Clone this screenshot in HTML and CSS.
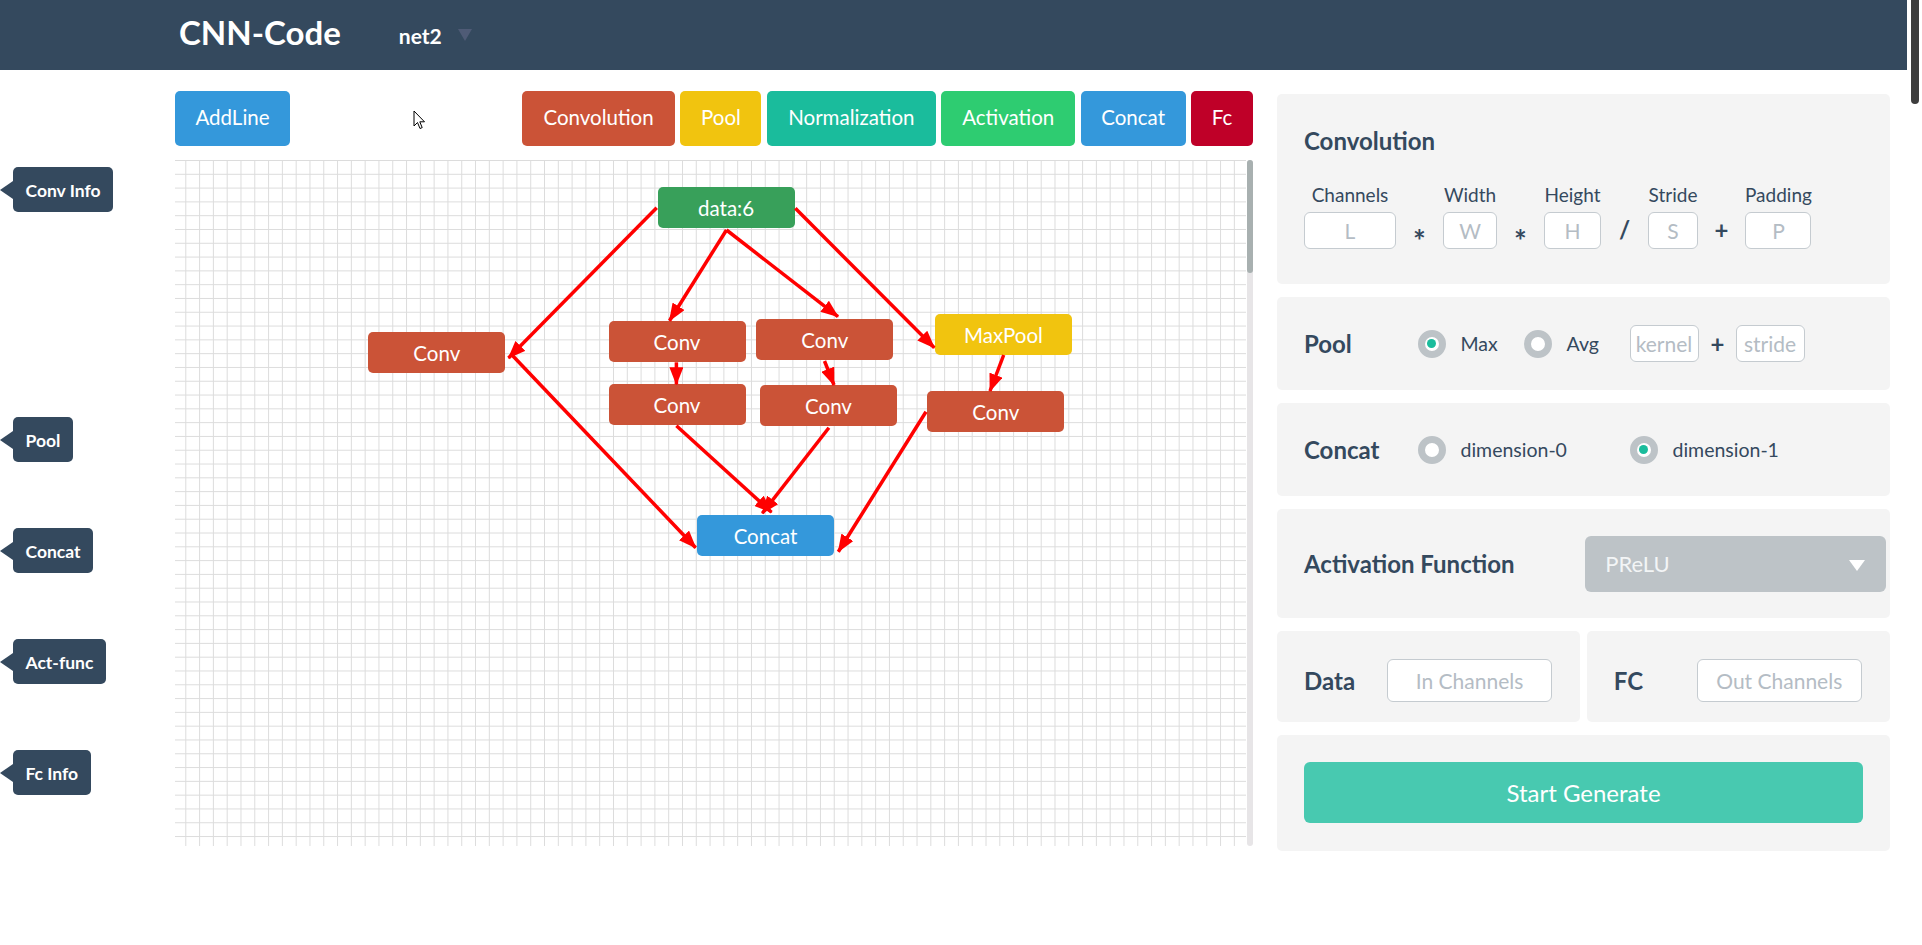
FILE: index.html
```html
<!DOCTYPE html>
<html lang="en">
<head>
<meta charset="utf-8">
<title>CNN-Code</title>
<link rel="stylesheet" href="styles.css">
</head>
<body>
<div class="page">
  <header class="topbar">
    <span class="brand">CNN-Code</span>
    <span class="net">net2</span>
    <span class="caret"></span>
  </header>
  <div class="main">
    <aside class="side">
      <div class="tip tip-first">Conv Info</div>
      <div class="tip">Pool</div>
      <div class="tip">Concat</div>
      <div class="tip">Act-func</div>
      <div class="tip">Fc Info</div>
    </aside>
    <section class="work">
      <div class="toolbar">
        <button class="btn b-add">AddLine</button>
        <div class="tools">
          <button class="btn b-conv">Convolution</button>
          <button class="btn b-pool">Pool</button>
          <button class="btn b-norm">Normalization</button>
          <button class="btn b-act">Activation</button>
          <button class="btn b-concat">Concat</button>
          <button class="btn b-fc">Fc</button>
        </div>
      </div>
      <div class="canvas">
        <div class="grid">
          <div class="node n-data" style="left:482.6px;top:27.3px">data:6</div>
          <div class="node n-conv" style="left:193.3px;top:172.3px">Conv</div>
          <div class="node n-conv" style="left:433.5px;top:161px">Conv</div>
          <div class="node n-conv" style="left:581.3px;top:159px">Conv</div>
          <div class="node n-conv" style="left:433.5px;top:224.3px">Conv</div>
          <div class="node n-conv" style="left:585px;top:225px">Conv</div>
          <div class="node n-pool" style="left:760px;top:154.3px">MaxPool</div>
          <div class="node n-conv" style="left:752.3px;top:231px">Conv</div>
          <div class="node n-concat" style="left:522px;top:355px">Concat</div>
          <svg class="links" viewBox="0 0 1071 686" width="1071" height="686">
            <defs>
              <marker id="ah" markerUnits="userSpaceOnUse" markerWidth="18" markerHeight="14" refX="17" refY="7" orient="auto">
                <path d="M0,0 L18,7 L0,14 Z" fill="#ff0000"/>
              </marker>
            </defs>
            <g stroke="#ff0000" stroke-width="3.5" fill="none" marker-end="url(#ah)">
              <line x1="481.7" y1="47.7" x2="333.5" y2="198"/>
              <line x1="337" y1="195" x2="520.7" y2="387.7"/>
              <line x1="551.5" y1="70" x2="494.5" y2="160.7"/>
              <line x1="551.5" y1="70" x2="663" y2="156.7"/>
              <line x1="620.3" y1="48.3" x2="759.3" y2="187.7"/>
              <line x1="501.4" y1="202.3" x2="501.4" y2="224.3"/>
              <line x1="649.5" y1="201" x2="659" y2="225"/>
              <line x1="828.7" y1="195" x2="815" y2="231"/>
              <line x1="501.4" y1="265.7" x2="596.5" y2="352.3"/>
              <line x1="653.9" y1="267.7" x2="587.3" y2="353.3"/>
              <line x1="751" y1="251.7" x2="663.3" y2="391.7"/>
            </g>
          </svg>
        </div>
        <div class="vscroll"><div class="vthumb"></div></div>
      </div>
    </section>
    <section class="panels">
      <div class="panel p-conv">
        <h3 class="ptitle">Convolution</h3>
        <div class="fields">
          <div class="field"><span class="flabel">Channels</span><input class="inp w-l" placeholder="L"></div>
          <span class="op op-star">*</span>
          <div class="field"><span class="flabel">Width</span><input class="inp w-w" placeholder="W"></div>
          <span class="op op-star">*</span>
          <div class="field"><span class="flabel">Height</span><input class="inp w-h" placeholder="H"></div>
          <span class="op">/</span>
          <div class="field"><span class="flabel">Stride</span><input class="inp w-s" placeholder="S"></div>
          <span class="op">+</span>
          <div class="field"><span class="flabel">Padding</span><input class="inp w-p" placeholder="P"></div>
        </div>
      </div>
      <div class="panel p-row p-mid">
        <span class="plabel">Pool</span>
        <div class="opts">
          <span class="radio on"><span class="rdot"></span>Max</span>
          <span class="radio"><span class="rdot"></span>Avg</span>
          <span class="pair"><input class="inp inp-sm" placeholder="kernel"><span class="plus">+</span></span>
          <span class="pair"><input class="inp inp-sm" placeholder="stride"></span>
        </div>
      </div>
      <div class="panel p-row p-mid">
        <span class="plabel">Concat</span>
        <div class="opts">
          <span class="radio span2"><span class="rdot"></span>dimension-0</span>
          <span class="radio on span2"><span class="rdot"></span>dimension-1</span>
        </div>
      </div>
      <div class="panel p-row p-act">
        <span class="plabel wide">Activation Function</span>
        <div class="select"><span>PReLU</span><span class="select-caret"></span></div>
      </div>
      <div class="p-split">
        <div class="panel p-row p-half">
          <span class="dlabel">Data</span>
          <input class="inp inp-ch" placeholder="In Channels">
        </div>
        <div class="panel p-row p-half">
          <span class="dlabel">FC</span>
          <input class="inp inp-ch" placeholder="Out Channels">
        </div>
      </div>
      <div class="panel p-start">
        <button class="gen">Start Generate</button>
      </div>
    </section>
  </div>
</div>
<div class="pscroll"><div class="pthumb"></div></div>
<svg class="cursor" viewBox="0 0 13 20" width="13" height="20">
  <path d="M1,1 L1,16 L4.5,12.5 L7,18.5 L9.2,17.6 L6.8,11.8 L11.5,11.8 Z" fill="#fff" stroke="#000" stroke-width="1" stroke-linejoin="round"/>
</svg>
</body>
</html>
```

FILE: styles.css
```css
* { box-sizing: border-box; }
html, body { margin: 0; padding: 0; }
body {
  font-family: Lato, "Open Sans", "Liberation Sans", sans-serif;
  color: #34495e;
  background: #fff;
  width: 1922px;
  height: 945px;
  overflow: hidden;
  position: relative;
}
.page { width: 1907px; }

/* header */
.topbar {
  height: 70px;
  background: #34495e;
  display: flex;
  align-items: center;
  padding-left: 179px;
  color: #fff;
}
.brand { font-size: 33px; font-weight: 700; line-height: 1; margin-bottom: 6px; }
.net { font-size: 21px; font-weight: 700; line-height: 1; margin-left: 58px; }
.caret {
  width: 0; height: 0;
  border-left: 7.5px solid transparent;
  border-right: 7.5px solid transparent;
  border-top: 12px solid #4f5b76;
  margin-left: 16px;
}

.main { display: flex; }

/* left tooltips */
.side {
  width: 175px;
  flex: none;
  display: flex;
  flex-direction: column;
  align-items: flex-start;
  padding-top: 97px;
  gap: 66px;
}
.tip {
  position: relative;
  margin-left: 13px;
  height: 45px;
  padding: 1px 12.5px 0;
  background: #34495e;
  color: #fff;
  border-radius: 5px;
  font-weight: 700;
  font-size: 17.5px;
  display: flex;
  align-items: center;
  white-space: nowrap;
}
.tip::before {
  content: "";
  position: absolute;
  left: -13px;
  top: 50%;
  margin-top: -9px;
  border-right: 13px solid #34495e;
  border-top: 9px solid transparent;
  border-bottom: 9px solid transparent;
}
.tip-first { margin-bottom: 139px; }

/* work area */
.work { width: 1078px; flex: none; padding-top: 21px; }
.toolbar { display: flex; justify-content: space-between; height: 55px; }
.tools { display: flex; gap: 5.4px; }
.btn {
  border: none;
  border-radius: 5px;
  color: #fff;
  font-family: inherit;
  font-size: 20.5px;
  padding: 0 0 3px;
  height: 55px;
  cursor: pointer;
}
.b-add { width: 115px; background: #3498db; }
.b-conv { width: 153px; background: #cb5337; }
.b-pool { width: 81px; background: #f1c40f; }
.b-norm { width: 169px; background: #1abc9c; }
.b-act { width: 134px; background: #2ecc71; }
.b-concat { width: 105px; background: #3498db; }
.b-fc { width: 62px; background: #bf0028; }

.canvas { margin-top: 14px; height: 686px; display: flex; }
.grid {
  flex: 1;
  position: relative;
  background-color: #fff;
  background-image:
    linear-gradient(90deg, #dcdcdc 1px, transparent 1px),
    linear-gradient(#dcdcdc 1px, transparent 1px);
  background-size: 13.8px 13.8px;
  background-position: 10.3px 0;
}
.vscroll { width: 6px; margin-left: 1px; background: #e7e5e7; border-radius: 3px; }
.vthumb { height: 113px; background: #a8b0b0; border-radius: 3px; }

.node {
  position: absolute;
  width: 137px;
  height: 41px;
  border-radius: 5px;
  color: #fff;
  font-size: 20.5px;
  display: flex;
  align-items: center;
  justify-content: center;
}
.n-data { background: #38a05a; }
.n-conv { background: #cb5337; }
.n-pool { background: #f1c40f; }
.n-concat { background: #3498db; }
.links { position: absolute; left: 0; top: 0; overflow: visible; pointer-events: none; }

/* right panels */
.panels {
  width: 613px;
  flex: none;
  margin-left: 24px;
  padding-top: 24px;
  display: flex;
  flex-direction: column;
  gap: 13px;
}
.panel { background: #f4f4f4; border-radius: 5px; padding: 0 27px; }
.p-conv { height: 190px; padding-top: 33px; }
.ptitle { margin: 0; font-size: 24px; font-weight: 700; line-height: 28.8px; }
.fields { display: flex; align-items: flex-end; margin-top: 27px; }
.field { display: flex; flex-direction: column; align-items: center; }
.flabel { font-size: 19px; line-height: 23px; white-space: nowrap; margin-bottom: 6px; }
.inp {
  height: 37px;
  border: 1px solid #c5cbd0;
  border-radius: 6px;
  background: #fff;
  font-family: inherit;
  font-size: 21px;
  text-align: center;
  color: #34495e;
  padding: 0;
  outline: none;
}
.inp::placeholder { color: #b4bcc4; }
.w-l { width: 92px; }
.w-w { width: 54px; }
.w-h { width: 57px; }
.w-s { width: 50px; }
.w-p { width: 66px; }
.op {
  width: 47px;
  height: 37px;
  flex: none;
  display: flex;
  align-items: center;
  justify-content: center;
  font-weight: 700;
  font-size: 24px;
  line-height: 1;
}
.op-star { font-size: 30px; padding-top: 20px; }

.p-row { display: flex; align-items: center; }
.p-mid { height: 93px; }
.plabel { font-size: 24px; font-weight: 700; width: 113.5px; flex: none; white-space: nowrap; }
.plabel.wide { width: auto; }
.opts { display: grid; grid-template-columns: repeat(4, 106px); align-items: center; }
.radio { display: flex; align-items: center; gap: 15px; font-size: 19.5px; white-space: nowrap; }
.span2 { grid-column: span 2; }
.rdot {
  position: relative;
  flex: none;
  width: 28px;
  height: 28px;
  border-radius: 50%;
  border: 7px solid #bdc3c7;
  background: #fff;
}
.on .rdot::after {
  content: "";
  position: absolute;
  left: 50%;
  top: 50%;
  width: 9px;
  height: 9px;
  margin: -4.5px 0 0 -4.5px;
  border-radius: 50%;
  background: #1abc9c;
}
.pair { display: flex; align-items: center; }
.inp-sm { width: 69px; }
.plus { font-size: 24px; font-weight: 700; margin-left: 12px; line-height: 1; }

.p-act { height: 109px; padding-right: 4.5px; justify-content: space-between; }
.select {
  width: 301px;
  height: 56px;
  flex: none;
  background: #bdc3c7;
  border-radius: 6px;
  display: flex;
  align-items: center;
  justify-content: space-between;
  padding: 0 21px 0 20.7px;
  color: #f3f5f6;
  font-size: 22px;
}
.select-caret {
  width: 0; height: 0;
  border-left: 8.3px solid transparent;
  border-right: 8.3px solid transparent;
  border-top: 11px solid #fff;
  margin-top: 3px;
}

.p-split { display: flex; gap: 6.5px; height: 91px; }
.p-half { flex: 1; padding-top: 7px; }
.dlabel { width: 83px; flex: none; font-size: 24px; font-weight: 700; }
.inp-ch { width: 165px; height: 43px; }

.p-start { padding: 27px 27px 28px; }
.gen {
  display: block;
  width: 100%;
  height: 61px;
  border: none;
  border-radius: 6px;
  background: #48c9b0;
  color: #fff;
  font-family: inherit;
  font-size: 24px;
  cursor: pointer;
}

/* overlays */
.pscroll { position: fixed; top: 0; right: 0; width: 15px; height: 945px; background: #fff; }
.pthumb { width: 8px; height: 104px; margin-left: 4px; background: #3d3d3d; border-radius: 0 0 4px 4px; }
.cursor { position: absolute; left: 413px; top: 110px; }
```
